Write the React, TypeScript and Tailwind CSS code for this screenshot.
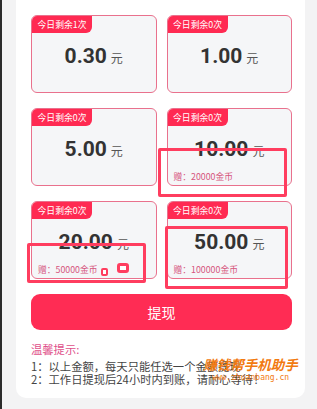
import React from "react"

type Option = { left: string; amount: string; gift?: string }

const OPTIONS: Option[] = [
  { left: "今日剩余1次", amount: "0.30" },
  { left: "今日剩余0次", amount: "1.00" },
  { left: "今日剩余0次", amount: "5.00" },
  { left: "今日剩余0次", amount: "10.00", gift: "赠：20000金币" },
  { left: "今日剩余0次", amount: "20.00", gift: "赠：50000金币" },
  { left: "今日剩余0次", amount: "50.00", gift: "赠：100000金币" },
]

const CJK = { fontFamily: '"Noto Sans CJK SC", "Noto Sans", sans-serif' }

function AmountCard({ opt }: { opt: Option }) {
  return (
    <div className="flex h-[78px] flex-col overflow-hidden rounded-[6px] border border-[#e9718d] bg-[#f5f6f8]">
      <div className="flex h-[17px] w-[60px] items-center justify-center rounded-br-[6px] bg-[#ff2a52] text-[8.8px] text-white">
        {opt.left}
      </div>
      <div className="mt-[11px] flex h-[24px] items-baseline justify-center gap-[4px] text-[#333]">
        <span className="text-[21px] font-bold leading-[24px]" style={{ fontFamily: "Roboto, sans-serif" }}>
          {opt.amount}
        </span>
        <span className="text-[12px] text-[#555]">元</span>
      </div>
      {opt.gift && (
        <div className="mt-[10px] pl-[6px] text-[8.8px] leading-[12px] text-[#d6557e]">{opt.gift}</div>
      )}
    </div>
  )
}

export default function App() {
  return (
    <div className="relative flex h-[409px] w-[317px] overflow-hidden bg-[#f3f3f4]" style={CJK}>
      <div className="w-[2px] bg-[#2b2b2b]" />
      <div className="ml-[14px] h-[398px] w-[289px] rounded-b-[10px] bg-white pl-[15px] pr-[13px] pt-[15px]">
        <div className="grid grid-cols-2 gap-x-[10px] gap-y-[15px]">
          {OPTIONS.map((o, i) => (
            <AmountCard key={i} opt={o} />
          ))}
        </div>
        <button className="mt-[15px] flex h-[36px] w-full items-center justify-center rounded-[9px] bg-[#ff2c54] text-[14px] text-white">
          提现
        </button>
        <div className="mt-[12px] text-[11.3px] leading-[14px] text-[#e0508a]">温馨提示:</div>
        <div className="mt-[4px] text-[11.3px] leading-[12.5px] text-[#444]">
          <div>1：以上金额，每天只能任选一个金额提现</div>
          <div>2：工作日提现后24小时内到账，请耐心等待！</div>
        </div>
      </div>

      {/* annotation boxes */}
      <div className="absolute left-[158px] top-[148px] h-[49px] w-[129px] rounded-[2px] border-[3px] border-[#ff3d5f]" />
      <div className="absolute left-[27px] top-[243px] h-[40px] w-[119px] rounded-[2px] border-[3px] border-[#ff3d5f]" />
      <div className="absolute left-[101px] top-[268px] h-[8px] w-[7px] rounded-[2px] border-[2px] border-[#ff3d5f] bg-white" />
      <div className="absolute left-[117px] top-[263px] h-[10px] w-[12px] rounded-[3px] border-[3px] border-[#ff3d5f] bg-white" />
      <div className="absolute left-[165px] top-[226px] h-[63px] w-[123px] rounded-[2px] border-[3px] border-[#ff3d5f]" />

      {/* watermark */}
      <div className="absolute left-[202px] top-[355px] flex w-[97px] flex-col items-center text-[#f27a10]">
        <div className="text-[13.5px] font-bold italic leading-[18px]">赚钱帮手机助手</div>
        <div className="text-[8px] leading-[9px]" style={{ fontFamily: '"DejaVu Sans Mono", monospace' }}>
          www.zhuanbang.cn
        </div>
      </div>
    </div>
  )
}
